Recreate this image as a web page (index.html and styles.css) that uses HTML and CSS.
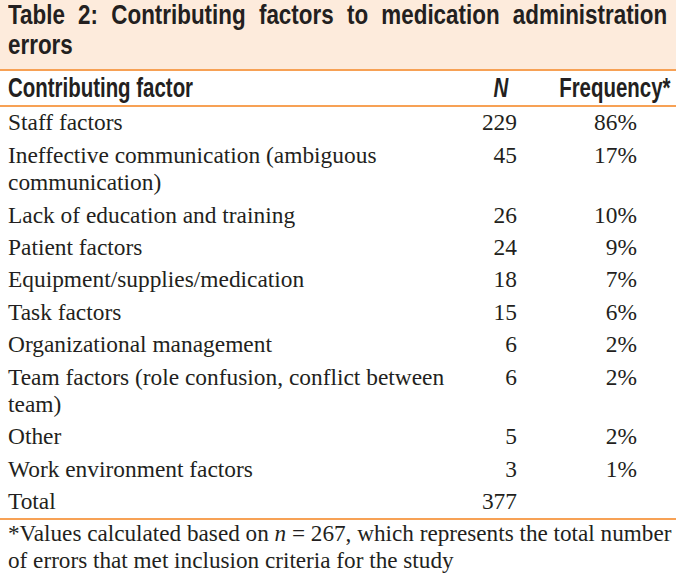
FILE: index.html
```html
<!DOCTYPE html>
<html>
<head>
<meta charset="utf-8">
<link rel="stylesheet" href="styles.css">
</head>
<body>
<div class="wrap">
  <div class="caption"><div class="caption-text">Table 2: Contributing factors to medication administration errors</div></div>
  <table class="tbl">
    <colgroup>
      <col class="w-factor">
      <col class="w-n">
      <col class="w-freq">
    </colgroup>
    <thead>
      <tr>
        <th class="c-factor"><span class="cond cond-l">Contributing factor</span></th>
        <th class="c-n"><span class="cond cond-r"><i>N</i></span></th>
        <th class="c-freq"><span class="cond cond-r">Frequency*</span></th>
      </tr>
    </thead>
    <tbody>
      <tr><td class="c-factor">Staff factors</td><td class="c-n">229</td><td class="c-freq">86%</td></tr>
      <tr><td class="c-factor">Ineffective communication (ambiguous communication)</td><td class="c-n">45</td><td class="c-freq">17%</td></tr>
      <tr><td class="c-factor">Lack of education and training</td><td class="c-n">26</td><td class="c-freq">10%</td></tr>
      <tr><td class="c-factor">Patient factors</td><td class="c-n">24</td><td class="c-freq">9%</td></tr>
      <tr><td class="c-factor">Equipment/supplies/medication</td><td class="c-n">18</td><td class="c-freq">7%</td></tr>
      <tr><td class="c-factor">Task factors</td><td class="c-n">15</td><td class="c-freq">6%</td></tr>
      <tr><td class="c-factor">Organizational management</td><td class="c-n">6</td><td class="c-freq">2%</td></tr>
      <tr><td class="c-factor">Team factors (role confusion, conflict between team)</td><td class="c-n">6</td><td class="c-freq">2%</td></tr>
      <tr><td class="c-factor">Other</td><td class="c-n">5</td><td class="c-freq">2%</td></tr>
      <tr><td class="c-factor">Work environment factors</td><td class="c-n">3</td><td class="c-freq">1%</td></tr>
      <tr><td class="c-factor">Total</td><td class="c-n">377</td><td class="c-freq"></td></tr>
    </tbody>
  </table>
  <div class="note">*Values calculated based on <i>n</i> = 267, which represents the total number<br>of errors that met inclusion criteria for the study</div>
</div>
</body>
</html>
```
FILE: styles.css
```css
html, body {
  margin: 0;
  padding: 0;
  background: #ffffff;
}
.wrap {
  width: 676px;
  color: #231f20;
  overflow: hidden;
}
.caption {
  background: #fdebdc;
  padding: 0 0 9px 8px;
  border-bottom: 2px solid #f7a155;
  overflow: hidden;
}
.caption-text {
  width: 824px;
  transform: scaleX(0.8);
  transform-origin: left center;
  font-family: "Liberation Sans", Arial, sans-serif;
  font-weight: bold;
  font-size: 28px;
  line-height: 30px;
  text-align: justify;
}
.tbl {
  width: 676px;
  table-layout: fixed;
  border-collapse: collapse;
  border-bottom: 2px solid #f7a155;
}
.w-factor { width: 448px; }
.w-n { width: 70px; }
.w-freq { width: 158px; }
.tbl th {
  font-family: "Liberation Sans", Arial, sans-serif;
  font-weight: bold;
  font-size: 28px;
  line-height: 30px;
  padding: 1.5px 0 2.5px 0;
  border-bottom: 2px solid #f7a155;
  white-space: nowrap;
}
.cond {
  display: inline-block;
  transform: scaleX(0.73);
}
.cond-l { transform-origin: left center; }
.cond-r { transform-origin: right center; }
.tbl td {
  font-family: "Liberation Serif", "Times New Roman", serif;
  font-size: 23.4px;
  line-height: 27.5px;
  padding: 2.45px 0;
  vertical-align: top;
}
.tbl .c-factor {
  text-align: left;
  padding-left: 8px;
}
.tbl th.c-n {
  text-align: right;
  padding-right: 10px;
}
.tbl td.c-n {
  text-align: right;
  padding-right: 1px;
}
.tbl th.c-freq {
  text-align: right;
  padding-right: 9px;
}
.tbl td.c-freq {
  text-align: right;
  padding-right: 39px;
}
.note {
  font-family: "Liberation Serif", "Times New Roman", serif;
  font-size: 23.2px;
  line-height: 26.5px;
  padding: 0 0 0 8px;
  white-space: nowrap;
}
```
